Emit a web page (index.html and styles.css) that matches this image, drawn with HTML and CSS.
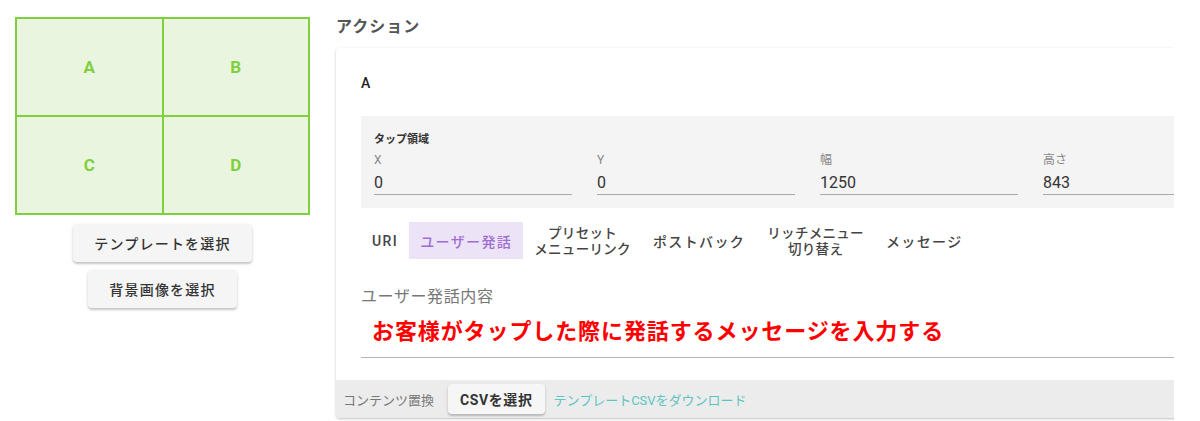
FILE: index.html
```html
<!DOCTYPE html>
<html lang="ja">
<head>
  <meta charset="UTF-8" />
  <title>リッチメニュー編集</title>
  <link rel="stylesheet" href="styles.css">
</head>
<body>
  <div class="page">
    <div class="preview">
      <div class="areas">
        <div class="area">A</div>
        <div class="area">B</div>
        <div class="area">C</div>
        <div class="area">D</div>
      </div>
      <button class="btn btn-wide">テンプレートを選択</button>
      <button class="btn">背景画像を選択</button>
    </div>

    <div class="actions">
      <h2 class="heading">アクション</h2>
      <div class="card">
        <div class="card-title">A</div>

        <div class="tap-area">
          <div class="tap-title">タップ領域</div>
          <div class="fields">
            <div class="field"><label>X</label><div class="value">0</div></div>
            <div class="field"><label>Y</label><div class="value">0</div></div>
            <div class="field"><label>幅</label><div class="value">1250</div></div>
            <div class="field"><label>高さ</label><div class="value">843</div></div>
          </div>
        </div>

        <div class="tabs">
          <div class="tab">URI</div>
          <div class="tab active">ユーザー発話</div>
          <div class="tab two-line">プリセット<br>メニューリンク</div>
          <div class="tab">ポストバック</div>
          <div class="tab two-line">リッチメニュー<br>切り替え</div>
          <div class="tab">メッセージ</div>
        </div>

        <div class="speech">
          <div class="speech-label">ユーザー発話内容</div>
          <div class="speech-input">お客様がタップした際に発話するメッセージを入力する</div>
        </div>

        <div class="footer">
          <span class="footer-label">コンテンツ置換</span>
          <button class="btn btn-small">CSVを選択</button>
          <a class="download" href="#">テンプレートCSVをダウンロード</a>
        </div>
      </div>
    </div>
  </div>
</body>
</html>
```

FILE: styles.css
```css
* { box-sizing: border-box; }
body {
  margin: 0;
  background: #fff;
  color: #333;
  font-family: Roboto, "Noto Sans CJK JP", sans-serif;
}
.page {
  display: flex;
  align-items: flex-start;
  gap: 20px;
}

/* left: preview of tap areas */
.preview {
  width: 310px;
  flex-shrink: 0;
  padding: 17px 0 0 15px;
  display: flex;
  flex-direction: column;
  align-items: center;
}
.areas {
  width: 295px;
  height: 198px;
  display: grid;
  grid-template-columns: 1fr 1fr;
  grid-template-rows: 1fr 1fr;
  gap: 2px;
  padding: 2px;
  background: #7fd03f;
  margin-bottom: 9px;
}
.area {
  background: #e9f5de;
  color: #7fd03f;
  font-size: 17px;
  font-weight: 700;
  display: flex;
  align-items: center;
  justify-content: center;
}
.btn {
  height: 38px;
  padding: 0 21px;
  margin-bottom: 8px;
  border: none;
  border-radius: 4px;
  background: #f5f5f5;
  color: #333;
  font-family: inherit;
  font-size: 14px;
  font-weight: 500;
  letter-spacing: 1.2px;
  box-shadow: 0 2px 2px rgba(0,0,0,0.18), 0 1px 4px rgba(0,0,0,0.08);
  cursor: pointer;
}

/* right: action settings */
.actions {
  width: 844px;
  flex-shrink: 0;
  overflow: hidden;
  padding: 15px 0 3px;
}
.heading {
  margin: 0 0 9px 6px;
  font-size: 16px;
  line-height: 24px;
  font-weight: 700;
  color: #555;
  letter-spacing: 1px;
}
.card {
  width: 1000px;
  margin-left: 6px;
  padding-top: 25px;
  border-radius: 4px;
  background: #fff;
  box-shadow: 0 1px 3px rgba(0,0,0,0.2), 0 1px 1px rgba(0,0,0,0.06);
  overflow: hidden;
}
.card-title {
  margin-left: 25px;
  font-size: 14px;
  line-height: 20px;
  font-weight: 500;
  color: #222;
}
.tap-area {
  margin: 23px 0 0 25px;
  height: 92px;
  padding: 16px 0 0 13px;
  background: #f4f4f4;
}
.tap-title {
  font-size: 11px;
  line-height: 16px;
  font-weight: 700;
  color: #333;
}
.fields {
  display: flex;
  gap: 25px;
  margin-top: 5px;
}
.field {
  width: 198px;
  flex-shrink: 0;
}
.field label {
  display: block;
  font-size: 12px;
  line-height: 14px;
  color: #888;
}
.value {
  margin-top: 5px;
  font-size: 16px;
  line-height: 22px;
  color: #333;
  border-bottom: 1px solid #aaa;
}

.tabs {
  display: flex;
  align-items: center;
  margin: 14px 0 0 25px;
  height: 37px;
}
.tab {
  height: 37px;
  padding: 0 11px;
  display: flex;
  align-items: center;
  justify-content: center;
  text-align: center;
  font-size: 14px;
  font-weight: 500;
  letter-spacing: 1.4px;
  color: #444;
}
.tab.active {
  background: #ede3f6;
  color: #9d6fd2;
}
.tab.two-line {
  font-size: 13.5px;
  line-height: 16px;
  letter-spacing: 0.3px;
}

.speech {
  margin: 27px 0 0 25px;
}
.speech-label {
  font-size: 16px;
  line-height: 22px;
  color: #777;
  letter-spacing: 0.6px;
}
.speech-input {
  margin-top: 9px;
  padding: 0 0 10px 11px;
  border-bottom: 1px solid #b5b5b5;
  font-size: 22px;
  line-height: 30px;
  font-weight: 700;
  letter-spacing: 0.9px;
  color: #ff0000;
}

.footer {
  margin-top: 22px;
  height: 38px;
  padding-left: 7px;
  display: flex;
  align-items: center;
  gap: 14px;
  background: #ececec;
}
.footer-label {
  font-size: 13px;
  color: #777;
}
.btn-small {
  height: 30px;
  margin: 0;
  padding: 0 12px;
  background: #f6f6f6;
  font-weight: 700;
  letter-spacing: 0.6px;
}
.download {
  margin-left: -5px;
  font-size: 13px;
  color: #5cc5c0;
  text-decoration: none;
}
```
